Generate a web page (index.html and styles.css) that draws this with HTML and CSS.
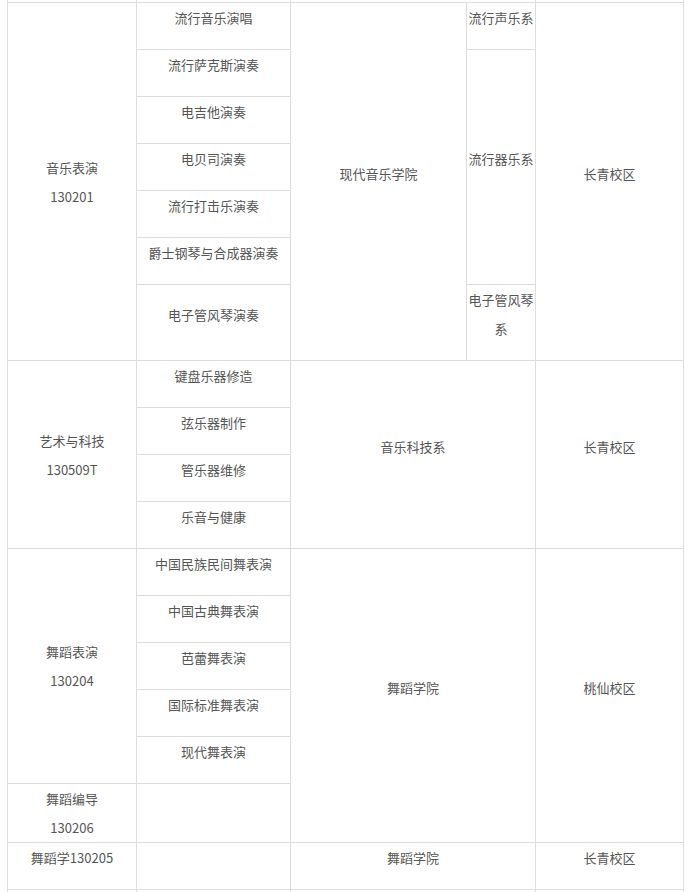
FILE: index.html
```html
<!DOCTYPE html>
<html lang="zh-CN">
<head>
<meta charset="utf-8">
<title>专业设置</title>
<link rel="stylesheet" href="styles.css">
</head>
<body>
<table class="tbl">
  <colgroup>
    <col class="c1"><col class="c2"><col class="c3"><col class="c4"><col class="c5">
  </colgroup>
  <tr class="pre"><td></td><td></td><td colspan="2"></td><td></td></tr>

  <tr>
    <td rowspan="7" class="major">音乐表演<br>130201</td>
    <td class="sub">流行音乐演唱</td>
    <td rowspan="7" class="sub">现代音乐学院</td>
    <td class="sub">流行声乐系</td>
    <td rowspan="7" class="sub">长青校区</td>
  </tr>
  <tr><td class="sub">流行萨克斯演奏</td><td rowspan="5" class="sub">流行器乐系</td></tr>
  <tr><td class="sub">电吉他演奏</td></tr>
  <tr><td class="sub">电贝司演奏</td></tr>
  <tr><td class="sub">流行打击乐演奏</td></tr>
  <tr><td class="sub">爵士钢琴与合成器演奏</td></tr>
  <tr><td class="sub">电子管风琴演奏</td><td class="sub">电子管风琴系</td></tr>

  <tr>
    <td rowspan="4" class="major">艺术与科技<br>130509T</td>
    <td class="sub">键盘乐器修造</td>
    <td rowspan="4" colspan="2" class="sub">音乐科技系</td>
    <td rowspan="4" class="sub">长青校区</td>
  </tr>
  <tr><td class="sub">弦乐器制作</td></tr>
  <tr><td class="sub">管乐器维修</td></tr>
  <tr><td class="sub">乐音与健康</td></tr>

  <tr>
    <td rowspan="5" class="major">舞蹈表演<br>130204</td>
    <td class="sub">中国民族民间舞表演</td>
    <td rowspan="6" colspan="2" class="sub">舞蹈学院</td>
    <td rowspan="6" class="sub">桃仙校区</td>
  </tr>
  <tr><td class="sub">中国古典舞表演</td></tr>
  <tr><td class="sub">芭蕾舞表演</td></tr>
  <tr><td class="sub">国际标准舞表演</td></tr>
  <tr><td class="sub">现代舞表演</td></tr>
  <tr><td class="major">舞蹈编导<br>130206</td><td class="sub"></td></tr>

  <tr>
    <td class="sub">舞蹈学130205</td>
    <td class="sub"></td>
    <td colspan="2" class="sub">舞蹈学院</td>
    <td class="sub">长青校区</td>
  </tr>
  <tr class="post"><td></td><td></td><td colspan="2"></td><td></td></tr>
</table>
</body>
</html>
```

FILE: styles.css
```css
html, body {
  margin: 0;
  padding: 0;
  background: #ffffff;
}

body {
  font-family: "Noto Sans CJK SC", "Noto Sans", sans-serif;
  font-size: 13px;
  color: #555555;
}

.tbl {
  border-collapse: collapse;
  table-layout: fixed;
  width: 677px;
  margin: -20px 0 0 7px;
}

.c1 { width: 129px; }
.c2 { width: 154px; }
.c3 { width: 176px; }
.c4 { width: 69px; }
.c5 { width: 148px; }

.tbl td {
  border: 1px solid #dddddd;
  padding: 0;
  text-align: center;
  vertical-align: middle;
  line-height: 29px;
}

.tbl td.sub {
  padding-bottom: 17px;
}

.tbl tr.pre td {
  height: 21px;
}

.tbl tr.post td {
  height: 40px;
}
```
